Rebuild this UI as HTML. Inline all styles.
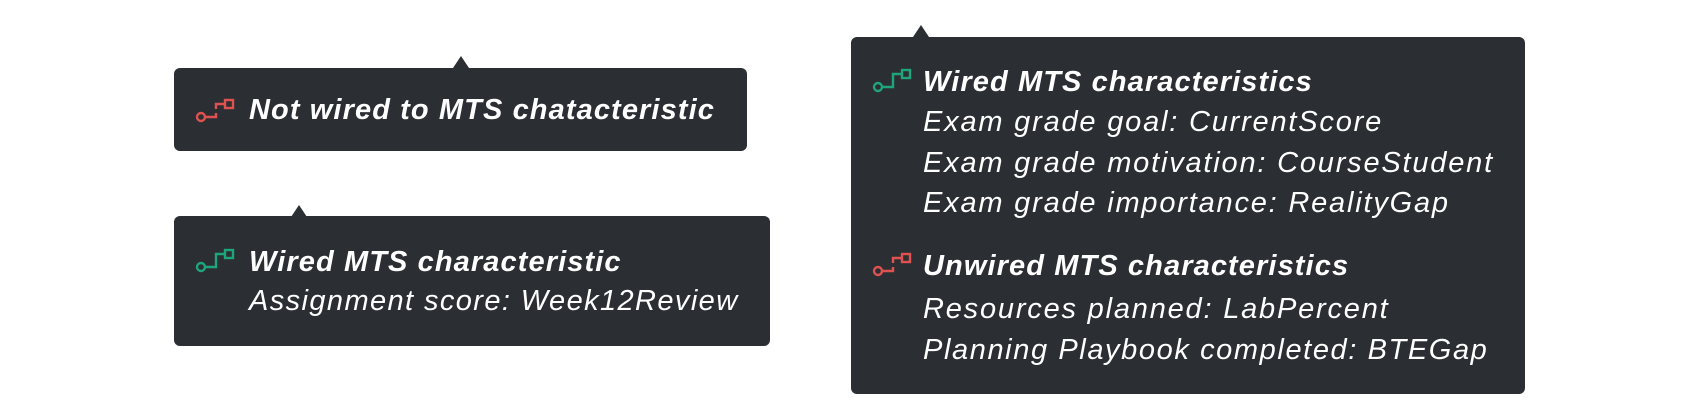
<!DOCTYPE html>
<html><head><style>
html,body{margin:0;padding:0;background:#fff;width:1707px;height:420px;overflow:hidden;position:relative}
.box{position:absolute;background:#2b2e33;border-radius:6px;color:#fff;font-family:"Liberation Sans",sans-serif;font-style:italic;font-size:29px;letter-spacing:1.8px}
.arr{position:absolute;width:0;height:0;border-left:8px solid transparent;border-right:8px solid transparent;border-bottom:12px solid #2b2e33}
.l{position:absolute;white-space:nowrap;line-height:40px}
.b{font-weight:bold;letter-spacing:1.1px}
svg{position:absolute}
</style></head><body>
<div class="arr" style="left:453px;top:56px"></div>
<div class="box" style="left:174px;top:68px;width:573px;height:83px">
<svg style="left:20px;top:26px" width="44" height="30" fill="none" stroke="#e0524f" stroke-width="2.4"><circle cx="7" cy="23" r="4"/><path d="M11 23H22V19M22 15V10H31"/><rect x="31" y="6" width="8" height="8"/></svg>
<div class="l b" style="left:75px;top:22px">Not wired to MTS chatacteristic</div>
</div>
<div class="arr" style="left:291px;top:205px"></div>
<div class="box" style="left:174px;top:216px;width:596px;height:130px">
<svg style="left:20px;top:28px" width="44" height="30" fill="none" stroke="#1fa57a" stroke-width="2.4"><circle cx="7" cy="23" r="4"/><path d="M11 23H22V10H31"/><rect x="31" y="6" width="8" height="8"/></svg>
<div class="l b" style="left:75px;top:26px">Wired MTS characteristic</div>
<div class="l" style="left:75px;top:65px;letter-spacing:1.4px">Assignment score: Week12Review</div>
</div>
<div class="arr" style="left:913px;top:25px"></div>
<div class="box" style="left:851px;top:37px;width:674px;height:357px">
<svg style="left:20px;top:27px" width="44" height="30" fill="none" stroke="#1fa57a" stroke-width="2.4"><circle cx="7" cy="23" r="4"/><path d="M11 23H22V10H31"/><rect x="31" y="6" width="8" height="8"/></svg>
<div class="l b" style="left:72px;top:25px">Wired MTS characteristics</div>
<div class="l" style="left:72px;top:65px">Exam grade goal: CurrentScore</div>
<div class="l" style="left:72px;top:106px">Exam grade motivation: CourseStudent</div>
<div class="l" style="left:72px;top:146px">Exam grade importance: RealityGap</div>
<svg style="left:20px;top:211px" width="44" height="30" fill="none" stroke="#e0524f" stroke-width="2.4"><circle cx="7" cy="23" r="4"/><path d="M11 23H22V19M22 15V10H31"/><rect x="31" y="6" width="8" height="8"/></svg>
<div class="l b" style="left:72px;top:209px">Unwired MTS characteristics</div>
<div class="l" style="left:72px;top:252px">Resources planned: LabPercent</div>
<div class="l" style="left:72px;top:293px;letter-spacing:1.6px">Planning Playbook completed: BTEGap</div>
</div>
</body></html>
